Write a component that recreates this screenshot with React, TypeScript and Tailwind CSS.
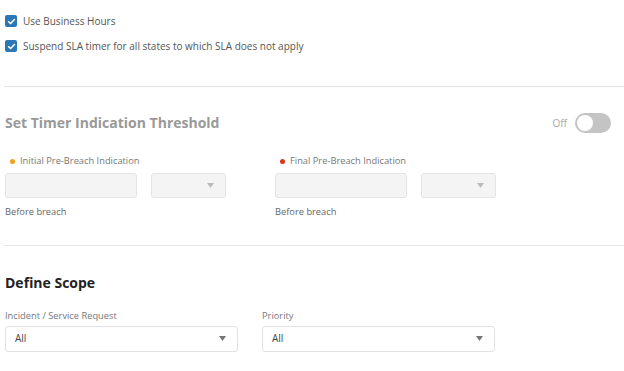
import React from "react";

const Check = ({ label }: { label: string }) => (
  <div className="flex items-center gap-[6px] h-[12px]">
    <div className="w-[12px] h-[12px] rounded-[2px] bg-[#2b77b6] flex items-center justify-center">
      <svg width="9" height="9" viewBox="0 0 10 10">
        <path d="M1.8 5.2 L4 7.3 L8.3 2.8" fill="none" stroke="white" strokeWidth="1.7" strokeLinecap="round" strokeLinejoin="round" />
      </svg>
    </div>
    <span className="text-[10px] text-[#555]">{label}</span>
  </div>
);

const Caret = ({ color = "#999" }: { color?: string }) => (
  <svg width="7" height="5" viewBox="0 0 7 5">
    <path d="M0 0 L7 0 L3.5 5 Z" fill={color} />
  </svg>
);

const Threshold = ({ dot, label }: { dot: string; label: string }) => (
  <div className="flex flex-col">
    <div className="flex items-center gap-[5px] pl-[5px] h-[12px]">
      <span className="w-[5px] h-[5px] rounded-full" style={{ background: dot }} />
      <span className="text-[9.3px] text-[#777]">{label}</span>
    </div>
    <div className="flex gap-[14px] mt-[6px]">
      <div className="w-[132px] h-[25px] rounded-[3px] border border-[#e4e4e4] bg-[#f4f4f4]" />
      <div className="w-[75px] h-[25px] rounded-[3px] border border-[#e4e4e4] bg-[#f4f4f4] flex items-center justify-end pr-[11px]">
        <Caret color="#bbb" />
      </div>
    </div>
    <div className="text-[9.3px] text-[#666] mt-[7px]">Before breach</div>
  </div>
);

const Select = ({ label }: { label: string }) => (
  <div className="flex flex-col">
    <div className="text-[9.3px] text-[#777] h-[12px] leading-[12px]">{label}</div>
    <div className="mt-[4px] w-[233px] h-[26px] rounded-[3px] border border-[#e2e2e2] bg-white flex items-center justify-between pl-[9px] pr-[11px]">
      <span className="text-[10px] text-[#444]">All</span>
      <Caret color="#777" />
    </div>
  </div>
);

export default function App() {
  return (
    <div
      className="w-[624px] h-[371px] bg-white overflow-hidden"
      style={{ fontFamily: '"Open Sans", sans-serif' }}
    >
      <div className="pl-[5px] pt-[15px] flex flex-col gap-[13px]">
        <Check label="Use Business Hours" />
        <Check label="Suspend SLA timer for all states to which SLA does not apply" />
      </div>
      <div className="ml-[4px] mt-[34px] h-px bg-[#e2e2e2]" />
      <div className="pl-[5px] pr-[13px] mt-[24px] flex items-center justify-between h-[24px]">
        <h2 className="text-[14px] font-bold text-[#999] -mt-[1px]">Set Timer Indication Threshold</h2>
        <div className="flex items-center gap-[8px]">
          <span className="text-[10px] text-[#aaa]">Off</span>
          <div className="w-[36px] h-[20px] rounded-full bg-[#c4c4c4] p-[2px] flex items-center">
            <div className="w-[16px] h-[16px] rounded-full bg-white" />
          </div>
        </div>
      </div>
      <div className="pl-[5px] flex gap-[49px] mt-[20px]">
        <Threshold dot="#f0a020" label="Initial Pre-Breach Indication" />
        <Threshold dot="#d9361c" label="Final Pre-Breach Indication" />
      </div>
      <div className="ml-[4px] mt-[26px] h-px bg-[#e6e6e6]" />
      <div className="pl-[5px] mt-[27px]">
        <h2 className="text-[14px] font-bold text-[#222] leading-[20px]">Define Scope</h2>
        <div className="flex gap-[24px] mt-[17px]">
          <Select label="Incident / Service Request" />
          <Select label="Priority" />
        </div>
      </div>
    </div>
  );
}
